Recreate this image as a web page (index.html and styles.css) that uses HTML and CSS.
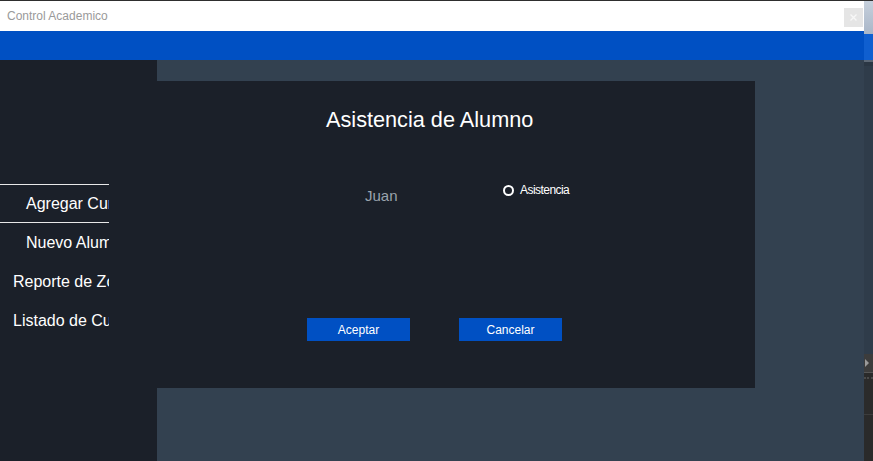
FILE: index.html
```html
<!DOCTYPE html>
<html lang="es">
<head>
<meta charset="utf-8">
<title>Control Academico</title>
<link rel="stylesheet" href="styles.css">
</head>
<body>
<div class="topline"></div>
<div class="screen">
  <div class="window">
    <div class="titlebar">
      <span class="title-text">Control Academico</span>
      <button class="close-btn" aria-label="Cerrar">
        <svg width="7" height="7" viewBox="0 0 7 7"><path d="M0.5 0.5 L6.5 6.5 M6.5 0.5 L0.5 6.5" stroke="#f7f7f7" stroke-width="1.4" fill="none"/></svg>
      </button>
    </div>
    <div class="bluebar"></div>
    <div class="body">
      <nav class="sidebar">
        <div class="menu">
          <div class="menu-item first pad-wide">Agregar Cursos</div>
          <div class="menu-item pad-wide">Nuevo Alumno</div>
          <div class="menu-item pad-narrow">Reporte de Zonas</div>
          <div class="menu-item pad-narrow">Listado de Cursos</div>
        </div>
      </nav>
      <main class="main">
        <section class="panel">
          <h1 class="panel-title">Asistencia de Alumno</h1>
          <div class="student-row">
            <div class="student-name">Juan</div>
            <label class="radio">
              <span class="radio-circle"></span>
              <span class="radio-text">Asistencia</span>
            </label>
          </div>
          <div class="actions">
            <button class="btn">Aceptar</button>
            <button class="btn">Cancelar</button>
          </div>
        </section>
      </main>
    </div>
  </div>
  <div class="desktop">
    <div class="d-light"></div>
    <div class="d-blue"></div>
    <div class="d-dash"></div>
    <div class="d-dark"></div>
    <div class="d-gray"><span class="d-arrow"></span></div>
    <div class="d-dots"></div>
    <div class="d-bottom"></div>
  </div>
</div>
</body>
</html>
```
FILE: styles.css
```css
* { box-sizing: border-box; }
html, body { margin: 0; padding: 0; }
body {
  width: 873px;
  height: 461px;
  overflow: hidden;
  font-family: "Liberation Sans", Arial, sans-serif;
  background: #2a2a2a;
}
.topline { height: 1px; background: #2e2e2e; }
.screen { display: flex; height: 460px; }
.window {
  width: 864px;
  display: flex;
  flex-direction: column;
}
.titlebar {
  height: 30px;
  background: #ffffff;
  display: flex;
  justify-content: space-between;
  align-items: flex-start;
}
.title-text {
  font-size: 12px;
  line-height: 14px;
  color: #9a9a9a;
  padding: 8px 0 0 7px;
}
.close-btn {
  width: 19px;
  height: 19px;
  margin: 7px 1px 0 0;
  padding: 0;
  border: none;
  background: #e5e5e5;
  display: flex;
  align-items: center;
  justify-content: center;
}
.bluebar { height: 29px; background: #0050c3; }
.body { flex: 1; display: flex; }
.sidebar {
  width: 157px;
  background: #1b2029;
  padding-top: 124px;
}
.menu { width: 109px; overflow: hidden; }
.menu-item {
  height: 39px;
  line-height: 39px;
  font-size: 16px;
  color: #ffffff;
  white-space: nowrap;
}
.menu-item.first {
  border-top: 1px solid #e8e8e8;
  border-bottom: 1px solid #e8e8e8;
  line-height: 37px;
}
.pad-wide { padding-left: 26px; }
.pad-narrow { padding-left: 13px; }
.main {
  flex: 1;
  background: #334150;
  padding-top: 21px;
}
.panel {
  width: 598px;
  height: 307px;
  background: #1b2029;
  padding-top: 27px;
  display: flex;
  flex-direction: column;
}
.panel-title {
  margin: 0 0 0 169px;
  font-size: 21.7px;
  line-height: 24px;
  font-weight: normal;
  color: #ffffff;
}
.student-row {
  display: flex;
  align-items: flex-start;
  height: 18px;
  margin-top: 51px;
}
.student-name {
  width: 138px;
  margin-left: 208px;
  padding-top: 4px;
  font-size: 15px;
  line-height: 18px;
  color: #9aa3ad;
}
.radio {
  display: flex;
  align-items: center;
  height: 14px;
  gap: 6px;
}
.radio-circle {
  width: 11px;
  height: 11px;
  border-radius: 50%;
  border: 2.5px solid #ffffff;
}
.radio-text {
  font-size: 12px;
  line-height: 14px;
  letter-spacing: -0.55px;
  color: #ffffff;
}
.actions {
  display: flex;
  gap: 49px;
  margin: 117px 0 0 150px;
}
.btn {
  width: 103px;
  height: 23px;
  border: none;
  padding: 2px 0 0;
  background: #0050c3;
  color: #ffffff;
  font-family: "Liberation Sans", Arial, sans-serif;
  font-size: 12px;
  line-height: 21px;
}
.desktop {
  width: 9px;
  display: flex;
  flex-direction: column;
}
.d-light { height: 33px; background: linear-gradient(#c6d0dc, #a9b6c8); }
.d-blue { height: 26px; background: #0f5fd0; }
.d-dash { height: 6px; background: #2b3744; border-top: 2px dashed #5b6775; }
.d-dark { height: 288px; background: #2f3c4a; }
.d-gray {
  height: 19px;
  background: #3c3c3c;
  border-bottom: 1px solid #555;
  position: relative;
}
.d-arrow {
  position: absolute;
  left: 1px;
  top: 5px;
  width: 0;
  height: 0;
  border-top: 4px solid transparent;
  border-bottom: 4px solid transparent;
  border-left: 4px solid #9a9a9a;
}
.d-dots { height: 38px; background: #2b2b2b; border-top: 2px dotted #4a4a4a; border-bottom: 1px solid #3c3c3c; margin-top: 4px; }
.d-bottom { flex: 1; background: #2a2a2a; }
```
